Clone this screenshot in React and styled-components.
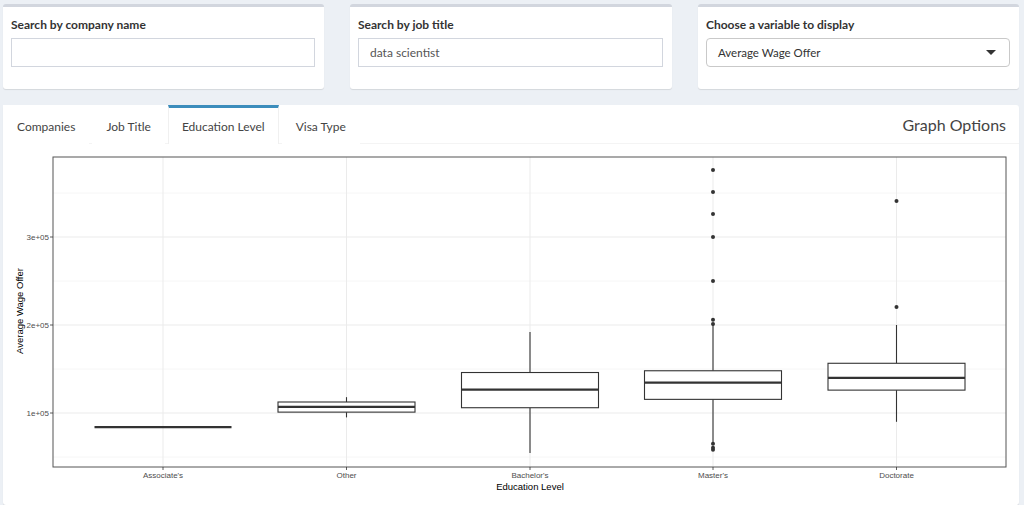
import React from 'react';
import styled, { createGlobalStyle } from 'styled-components';

const GlobalStyle = createGlobalStyle`
  body {
    margin: 0;
    background: #ecf0f5;
    font-family: Lato, "Open Sans", sans-serif;
    color: #333;
  }
`;

const Page = styled.div`
  padding: 4px 5px 0 3px;
`;

const TopRow = styled.div`
  display: flex;
  gap: 26px;
`;

const Box = styled.div`
  width: ${props => props.width || 321}px;
  height: 85px;
  box-sizing: border-box;
  background: #fff;
  border-top: 3px solid #d2d6de;
  border-radius: 3px;
  box-shadow: 0 1px 1px rgba(0,0,0,0.1);
  padding: 8px 9px 0 8px;
`;

const Label = styled.div`
  font-weight: 700;
  font-size: 12px;
  line-height: 20px;
  color: #333;
  margin-bottom: 3px;
`;

const TextInput = styled.input`
  display: block;
  width: 100%;
  height: 29px;
  box-sizing: border-box;
  border: 1px solid #d2d6de;
  padding: 0 11px;
  font-family: Lato, "Open Sans", sans-serif;
  font-size: 12px;
  color: #555;
  outline: 0;
`;

const SelectBox = styled.div`
  height: 29px;
  box-sizing: border-box;
  border: 1px solid #c9c9c9;
  border-radius: 4px;
  display: flex;
  align-items: center;
  justify-content: space-between;
  padding: 0 13px 0 11px;
  font-size: 11.5px;
  color: #333;
`;

const Caret = styled.span`
  width: 0;
  height: 0;
  border-left: 5px solid transparent;
  border-right: 5px solid transparent;
  border-top: 5px solid #333;
`;

const TabBox = styled.div`
  width: 1016px;
  margin-top: 16px;
  background: #fff;
  border-radius: 3px;
  box-shadow: 0 1px 1px rgba(0,0,0,0.1);
`;

const TabNav = styled.div`
  display: flex;
  align-items: stretch;
  height: 38px;
  border-bottom: 1px solid #f4f4f4;
`;

const Tab = styled.div`
  padding: 0 13px;
  margin-right: 3px;
  display: flex;
  align-items: center;
  font-size: 12px;
  color: #444;
  border-top: 3px solid ${props => props.active ? '#3c8dbc' : 'transparent'};
  border-left: 1px solid ${props => props.active ? '#f0f0f0' : 'transparent'};
  border-right: 1px solid ${props => props.active ? '#f0f0f0' : 'transparent'};
  margin-bottom: -1px;
  background: #fff;
`;

const TabTitle = styled.div`
  margin-left: auto;
  padding-right: 13px;
  display: flex;
  align-items: center;
  font-size: 16px;
  color: #444;
`;

const PlotWrap = styled.div`
  height: 361px;
`;

const yPos = k => 413 - (k - 100) * 0.88;

const boxes = [
  { label: "Associate's", x: 163, lo: 84, q1: 84, med: 84, q3: 84, hi: 84, out: [] },
  { label: 'Other', x: 346.5, lo: 95, q1: 101, med: 107, q3: 112.5, hi: 118, out: [] },
  { label: "Bachelor's", x: 530, lo: 54.5, q1: 106, med: 126.5, q3: 146, hi: 192, out: [] },
  { label: "Master's", x: 713, lo: 66, q1: 115.5, med: 134.5, q3: 148, hi: 200, out: [376, 351, 326, 300, 250, 206, 201, 65, 60.5, 58.3] },
  { label: 'Doctorate', x: 896.5, lo: 90, q1: 126, med: 140, q3: 156.5, hi: 200, out: [341, 220.5] },
];

const Plot = () => {
  const left = 53, right = 1006, top = 157, bottom = 467;
  const major = [100, 200, 300];
  const minor = [50, 150, 250, 350];
  return (
    <svg width="1016" height="361" viewBox="3 144 1016 361" style={{ display: 'block' }}>
      {minor.map(k => (
        <line key={'mi' + k} x1={left} x2={right} y1={yPos(k)} y2={yPos(k)} stroke="#f4f4f4" strokeWidth="0.8" />
      ))}
      {major.map(k => (
        <line key={'ma' + k} x1={left} x2={right} y1={yPos(k)} y2={yPos(k)} stroke="#ebebeb" strokeWidth="1" />
      ))}
      {boxes.map(b => (
        <line key={'vg' + b.label} x1={b.x} x2={b.x} y1={top} y2={bottom} stroke="#ebebeb" strokeWidth="1" />
      ))}
      {boxes.map(b => {
        const w = 68.5;
        return (
          <g key={b.label} stroke="#333" fill="none">
            <line x1={b.x} x2={b.x} y1={yPos(b.hi)} y2={yPos(b.q3)} strokeWidth="1.1" />
            <line x1={b.x} x2={b.x} y1={yPos(b.q1)} y2={yPos(b.lo)} strokeWidth="1.1" />
            <rect x={b.x - w} y={yPos(b.q3)} width={w * 2} height={yPos(b.q1) - yPos(b.q3)} fill="#fff" strokeWidth="1.1" />
            <line x1={b.x - w} x2={b.x + w} y1={yPos(b.med)} y2={yPos(b.med)} strokeWidth="2.2" />
            {b.out.map((o, i) => (
              <circle key={i} cx={b.x} cy={yPos(o)} r="2" fill="#333" stroke="none" />
            ))}
          </g>
        );
      })}
      <rect x={left} y={top} width={right - left} height={bottom - top} fill="none" stroke="#555" strokeWidth="1" />
      {major.map(k => (
        <g key={'t' + k}>
          <line x1={left - 3} x2={left} y1={yPos(k)} y2={yPos(k)} stroke="#333" strokeWidth="0.8" />
          <text x={49} y={yPos(k) + 3} textAnchor="end" fontSize="8" fill="#4d4d4d" fontFamily="'Liberation Sans', Arial, sans-serif">
            {k / 100}e+05
          </text>
        </g>
      ))}
      {boxes.map(b => (
        <g key={'xt' + b.label}>
          <line x1={b.x} x2={b.x} y1={bottom} y2={bottom + 3} stroke="#333" strokeWidth="0.8" />
          <text x={b.x} y={478} textAnchor="middle" fontSize="8" fill="#4d4d4d" fontFamily="'Liberation Sans', Arial, sans-serif">
            {b.label}
          </text>
        </g>
      ))}
      <text x={530} y={490} textAnchor="middle" fontSize="9.5" fill="#000" fontFamily="'Liberation Sans', Arial, sans-serif">
        Education Level
      </text>
      <text transform="translate(23 311) rotate(-90)" textAnchor="middle" fontSize="9.5" fill="#000" fontFamily="'Liberation Sans', Arial, sans-serif">
        Average Wage Offer
      </text>
    </svg>
  );
};

const tabs = ['Companies', 'Job Title', 'Education Level', 'Visa Type'];

const App = () => (
  <Page>
    <GlobalStyle />
    <TopRow>
      <Box>
        <Label>Search by company name</Label>
        <TextInput defaultValue="" />
      </Box>
      <Box width={322}>
        <Label>Search by job title</Label>
        <TextInput defaultValue="data scientist" />
      </Box>
      <Box>
        <Label>Choose a variable to display</Label>
        <SelectBox>
          <span>Average Wage Offer</span>
          <Caret />
        </SelectBox>
      </Box>
    </TopRow>
    <TabBox>
      <TabNav>
        {tabs.map(t => (
          <Tab key={t} active={t === 'Education Level'}>{t}</Tab>
        ))}
        <TabTitle>Graph Options</TabTitle>
      </TabNav>
      <PlotWrap>
        <Plot />
      </PlotWrap>
    </TabBox>
  </Page>
);

export default App;
